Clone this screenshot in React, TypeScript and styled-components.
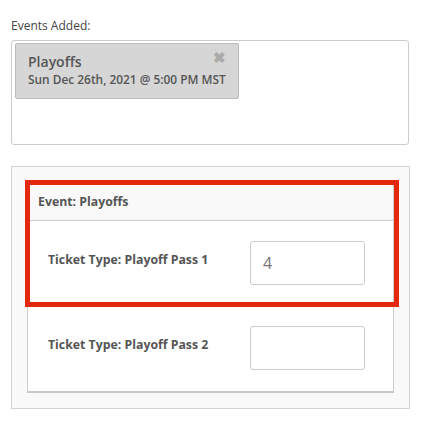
import React from "react";
import styled, { createGlobalStyle } from "styled-components";

const GlobalStyle = createGlobalStyle`
  body {
    margin: 0;
    background: #fff;
    font-family: "Open Sans", "Liberation Sans", sans-serif;
    color: #555;
  }
`;

const Page = styled.div`
  padding: 17px 24px 0 11px;
  width: 433px;
  box-sizing: border-box;
`;

const FieldLabel = styled.div`
  font-size: 12px;
  color: #444;
  line-height: 17px;
  margin-bottom: 6px;
`;

const EventsBox = styled.div`
  height: 105px;
  box-sizing: border-box;
  border: 1px solid #ccc;
  border-radius: 3px;
  padding: 2px 3px;
`;

const Chip = styled.div`
  position: relative;
  width: 224px;
  box-sizing: border-box;
  background: #d6d6d6;
  border: 1px solid #bbb;
  border-radius: 2px;
  padding: 8px 10px 10px 12px;
`;

const ChipTitle = styled.div`
  font-size: 14px;
  font-weight: 600;
  line-height: 19px;
  color: #555;
`;

const ChipDate = styled.div`
  font-size: 11.9px;
  font-weight: 600;
  line-height: 17px;
  color: #555;
  white-space: nowrap;
`;

const RemoveButton = styled.span`
  position: absolute;
  top: 5px;
  right: 12px;
  font-size: 15px;
  font-weight: 700;
  color: #aaa;
  line-height: 16px;
`;

const Panel = styled.div`
  margin-top: 21px;
  border: 1px solid #d4d4d4;
  background: #f9f9f9;
  padding: 15px;
  width: 399px;
  box-sizing: border-box;
`;

const Card = styled.div`
  position: relative;
  background: #fff;
  border: 1px solid #ccc;
  border-bottom: 2px solid #c8c8c8;
`;

const CardHeader = styled.div`
  background: #f9f9f9;
  border-bottom: 1px solid #ccc;
  height: 37px;
  padding: 0 10px;
  display: flex;
  align-items: center;
  font-size: 12.3px;
  font-weight: 700;
  color: #555;
`;

const TicketRow = styled.div`
  display: grid;
  grid-template-columns: 202px 115px;
  align-items: center;
  padding: 20px 0 21px 20px;
`;

const TicketLabel = styled.div`
  font-size: 12.3px;
  font-weight: 700;
  color: #555;
  margin-top: -8px;
`;

const QtyInput = styled.input`
  width: 115px;
  height: 44px;
  box-sizing: border-box;
  border: 1px solid #ccc;
  border-radius: 3px;
  padding: 0 12px;
  font-family: "Open Sans", "Liberation Sans", sans-serif;
  font-size: 16px;
  color: #777;
  outline: none;
`;

const Highlight = styled.div`
  position: absolute;
  left: -3px;
  top: -3px;
  width: 374px;
  height: 127px;
  box-sizing: border-box;
  border: 5px solid #e3290c;
  pointer-events: none;
`;

const tickets = [
  { name: "Playoff Pass 1", qty: "4" },
  { name: "Playoff Pass 2", qty: "" },
];

export default function App() {
  return (
    <Page>
      <GlobalStyle />
      <FieldLabel>Events Added:</FieldLabel>
      <EventsBox>
        <Chip>
          <ChipTitle>Playoffs</ChipTitle>
          <ChipDate>Sun Dec 26th, 2021 @ 5:00 PM MST</ChipDate>
          <RemoveButton>✖</RemoveButton>
        </Chip>
      </EventsBox>
      <Panel>
        <Card>
          <CardHeader>Event: Playoffs</CardHeader>
          {tickets.map((t) => (
            <TicketRow key={t.name}>
              <TicketLabel>Ticket Type: {t.name}</TicketLabel>
              <QtyInput defaultValue={t.qty} />
            </TicketRow>
          ))}
          <Highlight />
        </Card>
      </Panel>
    </Page>
  );
}
